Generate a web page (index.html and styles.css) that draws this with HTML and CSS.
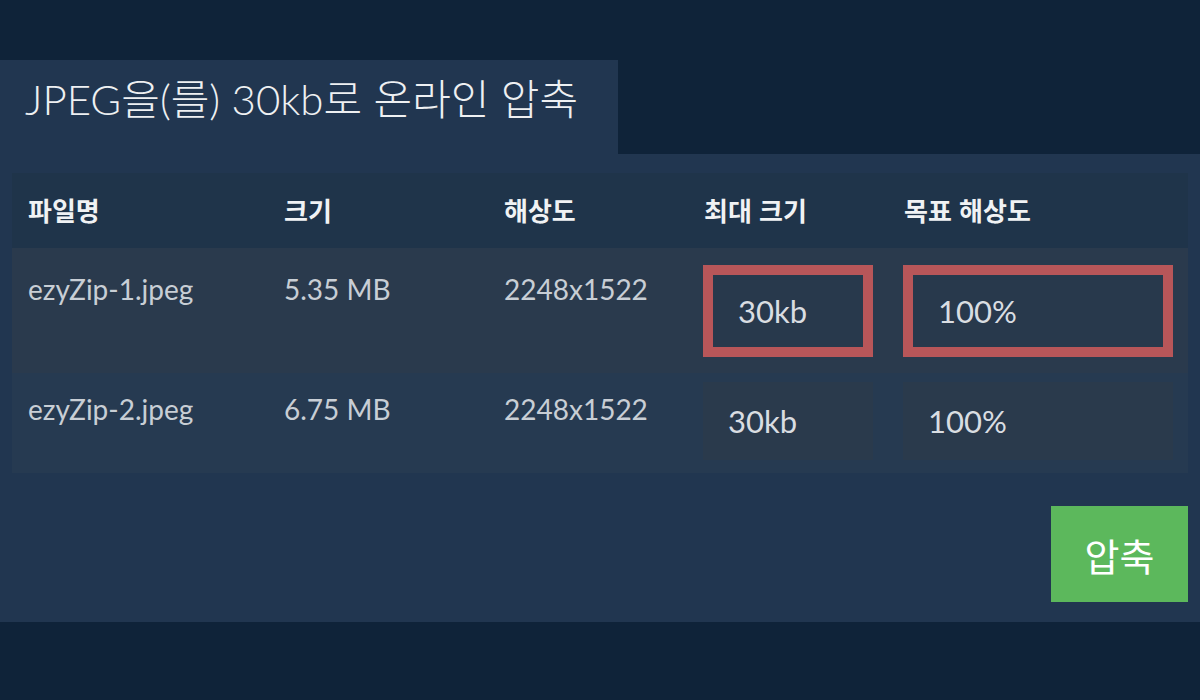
FILE: index.html
```html
<!DOCTYPE html>
<html lang="ko">
<head>
<meta charset="utf-8">
<title>JPEG을(를) 30kb로 온라인 압축</title>
<link rel="stylesheet" href="styles.css">
</head>
<body>
<div class="page">
  <div class="tab">
    <h1 class="title">JPEG을(를) 30kb로 온라인 압축</h1>
  </div>
  <div class="panel">
    <div class="table">
      <div class="row head">
        <div class="cell">파일명</div>
        <div class="cell">크기</div>
        <div class="cell">해상도</div>
        <div class="cell">최대 크기</div>
        <div class="cell">목표 해상도</div>
      </div>
      <div class="row r1">
        <div class="cell text">ezyZip-1.jpeg</div>
        <div class="cell text">5.35 MB</div>
        <div class="cell text">2248x1522</div>
        <div class="cell"><div class="field hl small">30kb</div></div>
        <div class="cell"><div class="field hl wide">100%</div></div>
      </div>
      <div class="row r2">
        <div class="cell text">ezyZip-2.jpeg</div>
        <div class="cell text">6.75 MB</div>
        <div class="cell text">2248x1522</div>
        <div class="cell"><div class="field small">30kb</div></div>
        <div class="cell"><div class="field wide">100%</div></div>
      </div>
    </div>
    <div class="actions">
      <button class="btn">압축</button>
    </div>
  </div>
</div>
</body>
</html>
```
FILE: styles.css
```css
html, body {
  margin: 0;
  padding: 0;
  background: #0f2339;
}
body {
  font-family: "Lato", "Noto Sans CJK KR", sans-serif;
  width: 1200px;
  height: 700px;
  overflow: hidden;
}
.page {
  padding-top: 60px;
}
.tab {
  width: 618px;
  height: 94px;
  background: #213650;
  display: flex;
  align-items: center;
  box-sizing: border-box;
  padding: 0 0 16px 25px;
}
.title {
  margin: 0;
  font-family: "Lato", "Noto Sans CJK KR", sans-serif;
  font-weight: 300;
  font-size: 42px;
  line-height: 1;
  color: #eef0f2;
  white-space: nowrap;
}
.panel {
  background: #213650;
  height: 468px;
  box-sizing: border-box;
  padding: 19px 12px 0;
}
.table {
  width: 1176px;
}
.row {
  display: grid;
  grid-template-columns: 256px 220px 200px 200px 300px;
}
.cell {
  padding-left: 16px;
  box-sizing: border-box;
}
.head {
  height: 75px;
  background: #1f344a;
  align-items: center;
}
.head .cell {
  font-family: "Noto Sans CJK KR", sans-serif;
  font-weight: 700;
  font-size: 26px;
  color: #f0f2f4;
  line-height: 1;
  padding-bottom: 2px;
}
.r1 {
  height: 125px;
  background: #2a3a4d;
}
.r2 {
  height: 100px;
  background: #263a51;
}
.text {
  font-size: 28px;
  line-height: 32px;
  color: #c8ced5;
}
.r1 .text { padding-top: 25px; }
.r2 .text { padding-top: 20px; }
.r1 .cell:nth-child(n+4) { padding-top: 17px; }
.r2 .cell:nth-child(n+4) { padding-top: 9px; }
.field {
  margin-left: -1px;
  box-sizing: border-box;
  display: flex;
  align-items: center;
  padding-left: 25px;
  font-size: 31px;
  color: #d9dde2;
  background: #2a3a4c;
  height: 78px;
}
.field.hl {
  height: 92px;
  border: 10px solid #b85659;
  background: #28394c;
}
.field.small { width: 170px; }
.field.wide { width: 270px; }
.actions {
  display: flex;
  justify-content: flex-end;
  width: 1176px;
  padding-top: 33px;
}
.btn {
  width: 137px;
  height: 96px;
  border: none;
  background: #5cb85c;
  color: #ffffff;
  font-family: "Noto Sans CJK KR", sans-serif;
  font-weight: 400;
  font-size: 38px;
  padding: 0;
  cursor: pointer;
}
```
